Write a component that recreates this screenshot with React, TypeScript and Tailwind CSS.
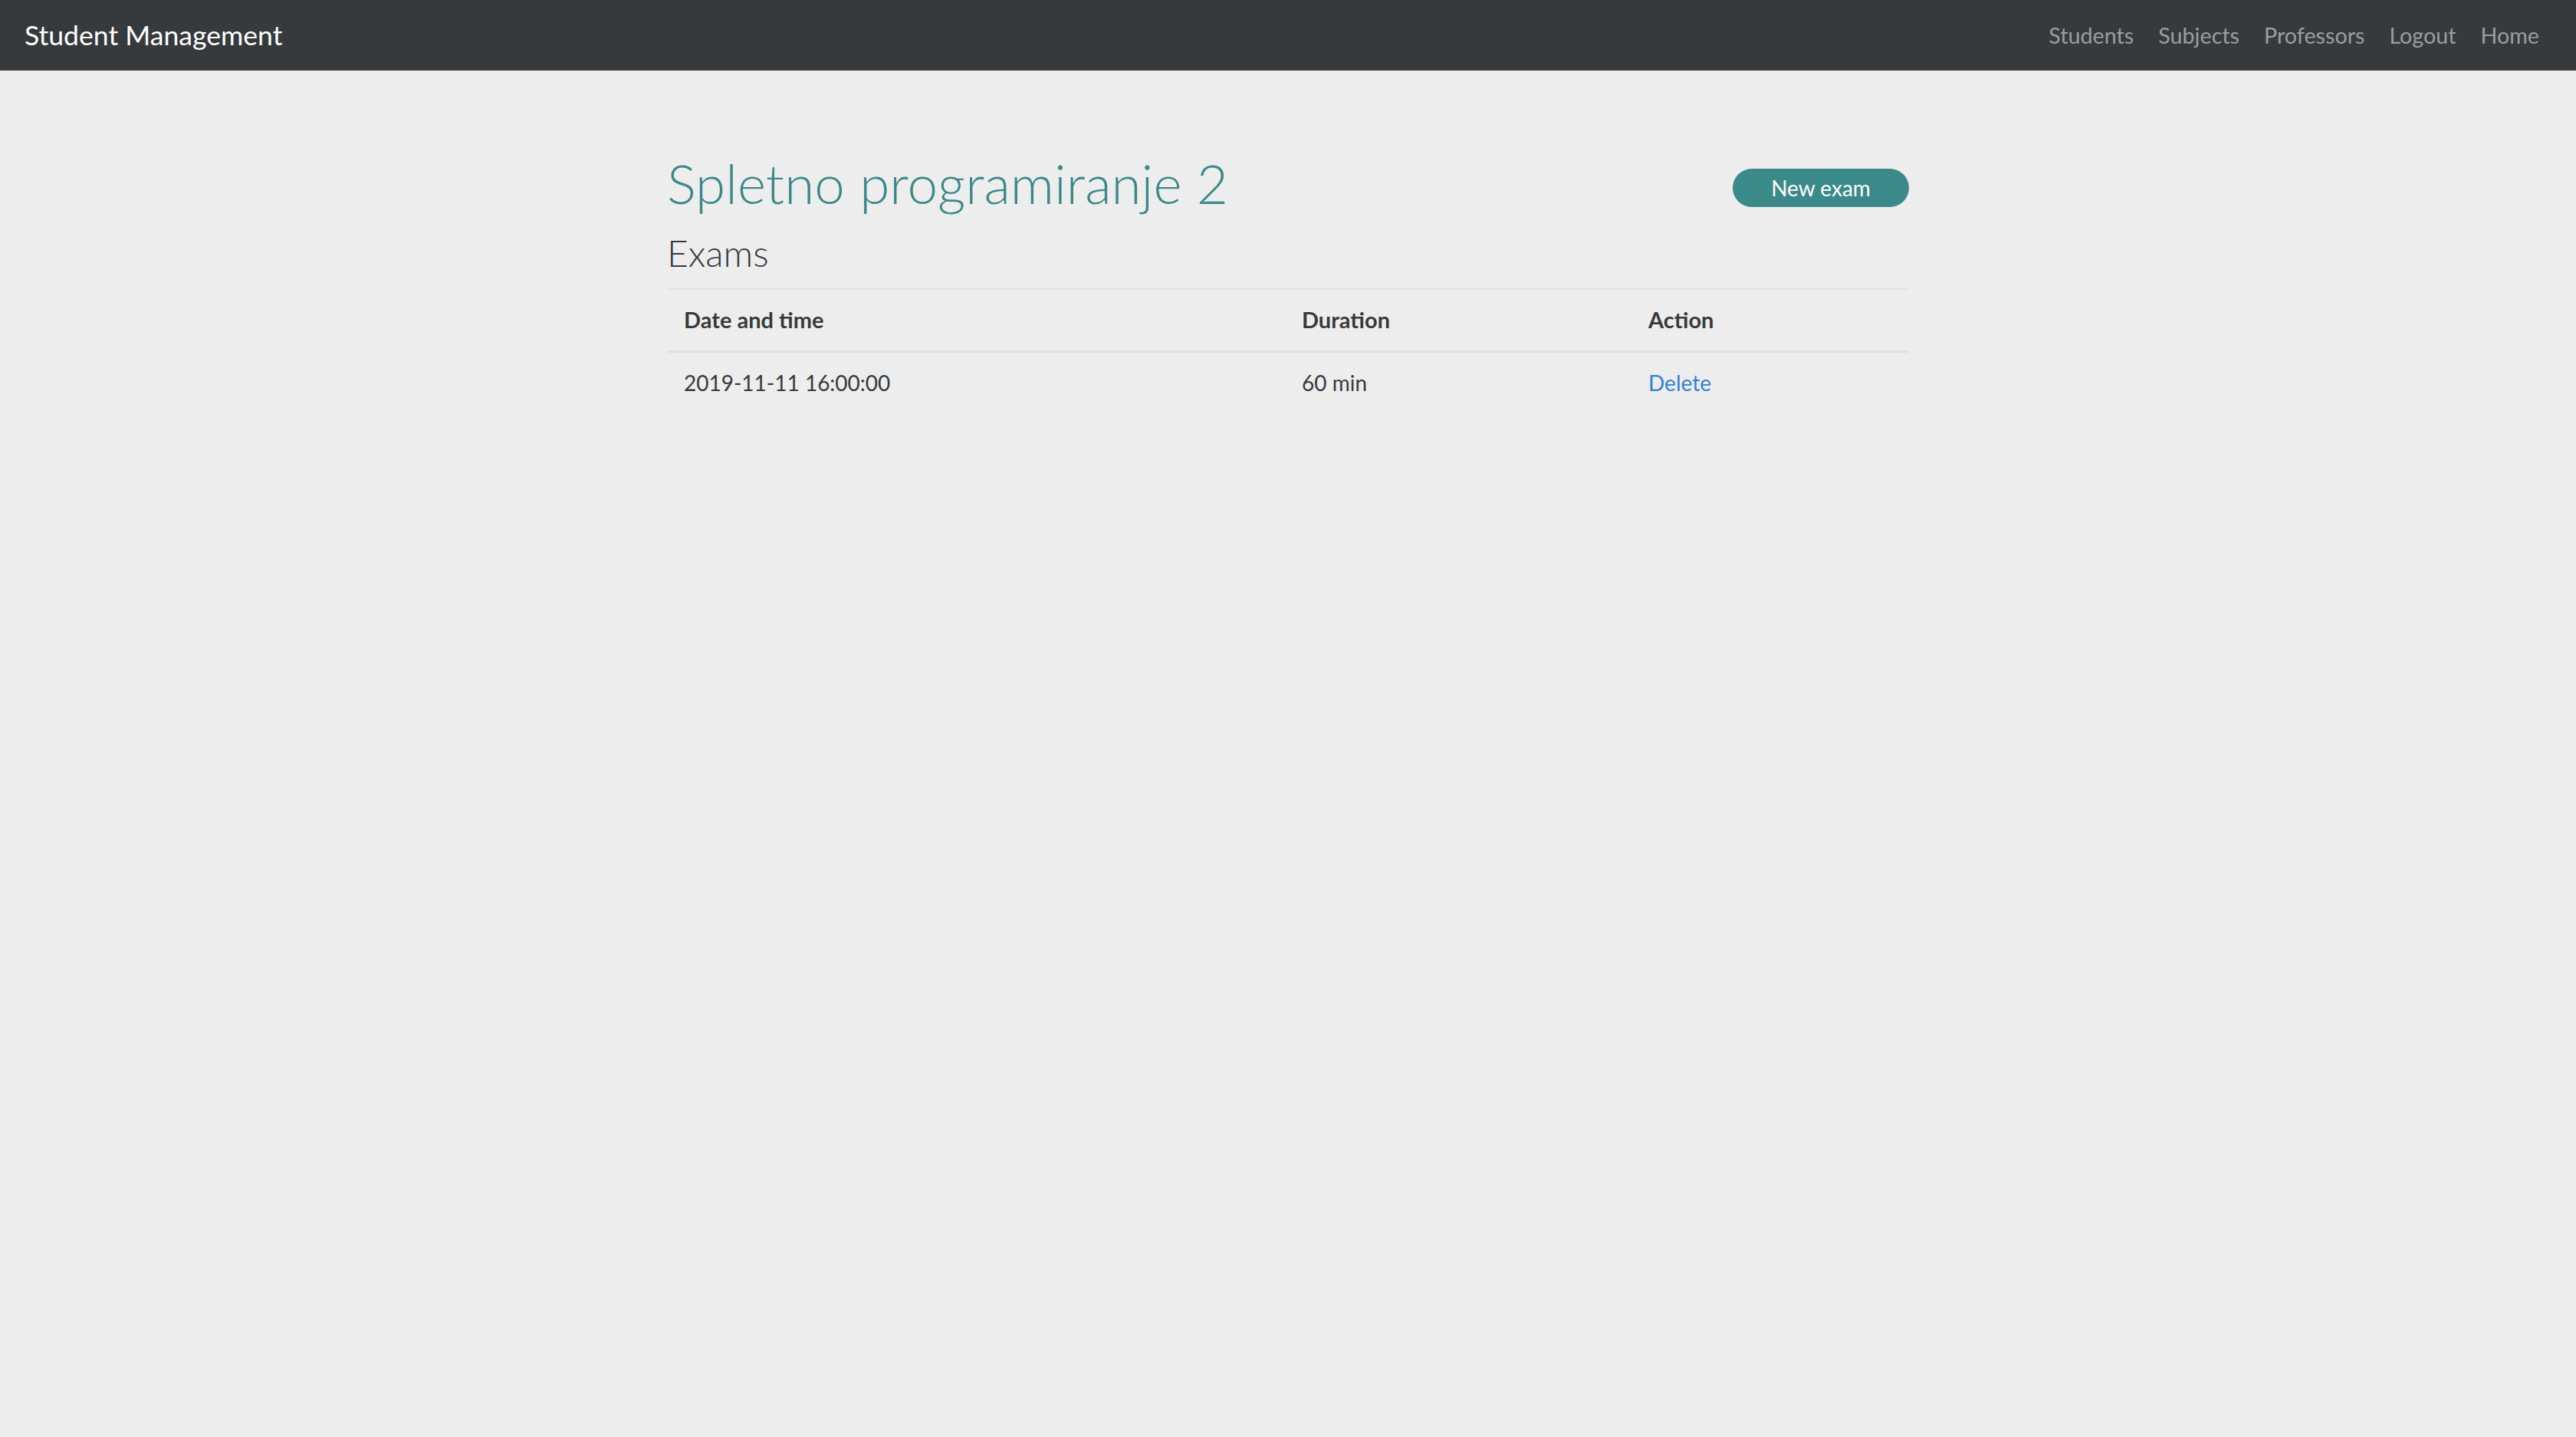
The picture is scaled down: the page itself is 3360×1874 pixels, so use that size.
import React from "react";

const navLinks = ["Students", "Subjects", "Professors", "Logout", "Home"];

const exams = [{ id: 1, date: "2019-11-11 16:00:00", duration: 60 }];

export default function App() {
  return (
    <div className="min-h-screen bg-[#ededed] font-['Lato',sans-serif] text-[#373a3c]">
      {/* Navbar */}
      <nav className="flex h-[92px] items-center justify-between bg-[#363a3d] px-[32px]">
        <a href="#" className="text-[35.6px] leading-none text-white">
          Student Management
        </a>
        <ul className="flex items-center">
          {navLinks.map((l) => (
            <li key={l}>
              <a href="#" className="block px-[16px] text-[28.7px] leading-[42px] text-[#9b9d9f]">
                {l}
              </a>
            </li>
          ))}
        </ul>
      </nav>

      <main className="mx-auto w-[1620px] pt-[104px]">
        <div className="flex items-start justify-between">
          <h1 className="text-[71px] font-light leading-[85px] text-[#3a8a89]">Spletno programiranje 2</h1>
          <button className="mt-[24px] flex h-[50px] w-[230px] items-center justify-center rounded-full bg-[#3a8a89] text-[28px] text-white">
            New exam
          </button>
        </div>

        <h3 className="mt-[21px] text-[48px] font-light leading-[56px] text-[#373a3c]">Exams</h3>

        {/* Exams table */}
        <table className="mt-[18px] w-full table-fixed border-collapse text-[28px] leading-[42px]">
          <thead>
            <tr className="border-t-2 border-b-[3px] border-[#dde1e5] text-[29px]">
              <th className="w-[806px] px-[22px] pt-[18px] pb-[19px] text-left font-bold">Date and time</th>
              <th className="w-[452px] px-[22px] pt-[18px] pb-[19px] text-left font-bold">Duration</th>
              <th className="px-[22px] pt-[18px] pb-[19px] text-left font-bold">Action</th>
            </tr>
          </thead>
          <tbody>
            {exams.map((e) => (
              <tr key={e.id}>
                <td className="px-[22px] py-[18px]">{e.date}</td>
                <td className="px-[22px] py-[18px]">{e.duration} min</td>
                <td className="px-[22px] py-[18px]">
                  <a href="#" className="text-[#2f80e0]">
                    Delete
                  </a>
                </td>
              </tr>
            ))}
          </tbody>
        </table>
      </main>
    </div>
  );
}
